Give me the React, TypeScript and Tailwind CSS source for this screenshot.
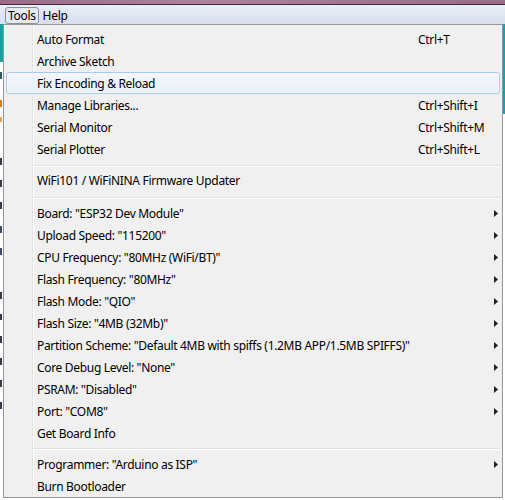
import type { ReactNode } from "react";

type Item =
  | { kind: "item"; label: string; shortcut?: string; sub?: boolean; hover?: boolean }
  | { kind: "sep"; h: string; top: string };

const ITEMS: Item[] = [
  { kind: "item", label: "Auto Format", shortcut: "Ctrl+T" },
  { kind: "item", label: "Archive Sketch" },
  { kind: "item", label: "Fix Encoding & Reload", hover: true },
  { kind: "item", label: "Manage Libraries...", shortcut: "Ctrl+Shift+I" },
  { kind: "item", label: "Serial Monitor", shortcut: "Ctrl+Shift+M" },
  { kind: "item", label: "Serial Plotter", shortcut: "Ctrl+Shift+L" },
  { kind: "sep", h: "h-[9px]", top: "pt-[5px]" },
  { kind: "item", label: "WiFi101 / WiFiNINA Firmware Updater" },
  { kind: "sep", h: "h-[11px]", top: "pt-[6px]" },
  { kind: "item", label: 'Board: "ESP32 Dev Module"', sub: true },
  { kind: "item", label: 'Upload Speed: "115200"', sub: true },
  { kind: "item", label: 'CPU Frequency: "80MHz (WiFi/BT)"', sub: true },
  { kind: "item", label: 'Flash Frequency: "80MHz"', sub: true },
  { kind: "item", label: 'Flash Mode: "QIO"', sub: true },
  { kind: "item", label: 'Flash Size: "4MB (32Mb)"', sub: true },
  { kind: "item", label: 'Partition Scheme: "Default 4MB with spiffs (1.2MB APP/1.5MB SPIFFS)"', sub: true },
  { kind: "item", label: 'Core Debug Level: "None"', sub: true },
  { kind: "item", label: 'PSRAM: "Disabled"', sub: true },
  { kind: "item", label: 'Port: "COM8"', sub: true },
  { kind: "item", label: "Get Board Info" },
  { kind: "sep", h: "h-[9px]", top: "pt-[4px]" },
  { kind: "item", label: 'Programmer: "Arduino as ISP"', sub: true },
  { kind: "item", label: "Burn Bootloader" },
];

function Arrow() {
  return (
    <svg width="4" height="7" viewBox="0 0 4 7" className="shrink-0">
      <path d="M0 0 L4 3.5 L0 7 Z" fill="#1e1e1e" />
    </svg>
  );
}

function MenuRow({ label, shortcut, sub, hover }: { label: string; shortcut?: string; sub?: boolean; hover?: boolean }) {
  return (
    <div
      className={`h-[22px] mx-[2px] flex items-center pl-[30px] pr-[1px] rounded-[3px] border ${
        hover
          ? "border-[#a8caf0] bg-[linear-gradient(to_bottom,#f3f6fb,#e9eef7)] shadow-[inset_0_0_0_1px_#f8fafd]"
          : "border-transparent"
      }`}
    >
      <span className="w-[381px] shrink-0 whitespace-nowrap pt-[2px]">{label}</span>
      <span className="flex-1 whitespace-nowrap pt-[2px]">{shortcut}</span>
      {sub && <Arrow />}
    </div>
  );
}

function Separator({ h, top }: { h: string; top: string }) {
  return (
    <div className={`${h} ${top} ml-[29px] mr-[2px]`}>
      <div className="h-[2px] border-t border-[#e0e0e0] border-b border-b-white" />
    </div>
  );
}

function EditorEdge(): ReactNode {
  // the few bits of the editor that peek out left of the menu
  return (
    <div className="w-[3px] flex flex-col">
      <div className="h-[38px] bg-[#17a1a5]" />
      <div className="h-[10px]" />
      <div className="h-[7px] w-[2px] bg-[#2d5a5a]" />
      <div className="h-[21px]" />
      <div className="h-[7px] w-[2px] bg-[#e07a1f]" />
      <div className="h-[10px]" />
      <div className="h-[5px] w-[2px] bg-[#f0a050]" />
      <div className="h-[36px]" />
      <div className="h-[7px] w-[2px] bg-[#3a3a4a]" />
      <div className="h-[15px]" />
      <div className="h-[7px] w-[2px] bg-[#3a3a4a]" />
      <div className="h-[15px]" />
      <div className="h-[7px] w-[2px] bg-[#3a3a4a]" />
      <div className="h-[17px]" />
      <div className="h-[7px] w-[2px] bg-[#3a4a6a]" />
      <div className="h-[15px]" />
      <div className="h-[7px] w-[2px] bg-[#3a4a6a]" />
      <div className="h-[37px]" />
      <div className="h-[7px] w-[2px] bg-[#3a3a4a]" />
      <div className="h-[15px]" />
      <div className="h-[6px] w-[2px] bg-[#3a3a4a]" />
      <div className="h-[16px]" />
      <div className="h-[7px] w-[2px] bg-[#3a3a4a]" />
      <div className="h-[15px]" />
      <div className="h-[7px] w-[2px] bg-[#3a3a4a]" />
      <div className="h-[15px]" />
      <div className="h-[7px] w-[2px] bg-[#3a3a4a]" />
      <div className="h-[15px]" />
      <div className="h-[7px] w-[2px] bg-[#3a3a4a]" />
    </div>
  );
}

export default function App() {
  return (
    <div
      className="w-[505px] h-[500px] overflow-hidden bg-white text-black text-[12px] leading-none tracking-[-0.32px]"
      style={{ fontFamily: '"Noto Sans", "Segoe UI", sans-serif' }}
    >
      {/* title bar bottom */}
      <div className="h-[4px] bg-[linear-gradient(to_right,#9c6a86,#b0819c_40%,#a57590_70%,#9a6b88)]" />
      <div className="h-[1px] bg-[#3b2a36]" />

      {/* menu bar */}
      <div className="h-[19px] flex items-start pl-[5px] bg-[linear-gradient(to_bottom,#eaeff8,#d6deed)]">
        <div className="mt-[2px] h-[17px] px-[2px] pt-[1px] flex items-center rounded-[3px] border border-[#8a8f99] bg-[#e4e8f0]">
          Tools
        </div>
        <div className="ml-[4px] h-[19px] pt-[3px] flex items-center">Help</div>
      </div>

      {/* editor + dropdown */}
      <div className="flex h-[476px]">
        <EditorEdge />
        <div className="w-[500px] h-[474px] border border-[#979797] bg-[#f0f0f0] bg-[linear-gradient(to_right,#f0f0f0_28px,#e2e3e3_28px,#e2e3e3_29px,#ffffff_29px,#ffffff_30px,#f0f0f0_30px)] pt-[3px] flex flex-col">
          {ITEMS.map((it, i) =>
            it.kind === "sep" ? (
              <Separator key={i} h={it.h} top={it.top} />
            ) : (
              <MenuRow key={i} label={it.label} shortcut={it.shortcut} sub={it.sub} hover={it.hover} />
            )
          )}
        </div>
        <div className="w-[2px] flex flex-col">
          <div className="h-[90px] bg-[#17a1a5]" />
        </div>
      </div>
    </div>
  );
}
